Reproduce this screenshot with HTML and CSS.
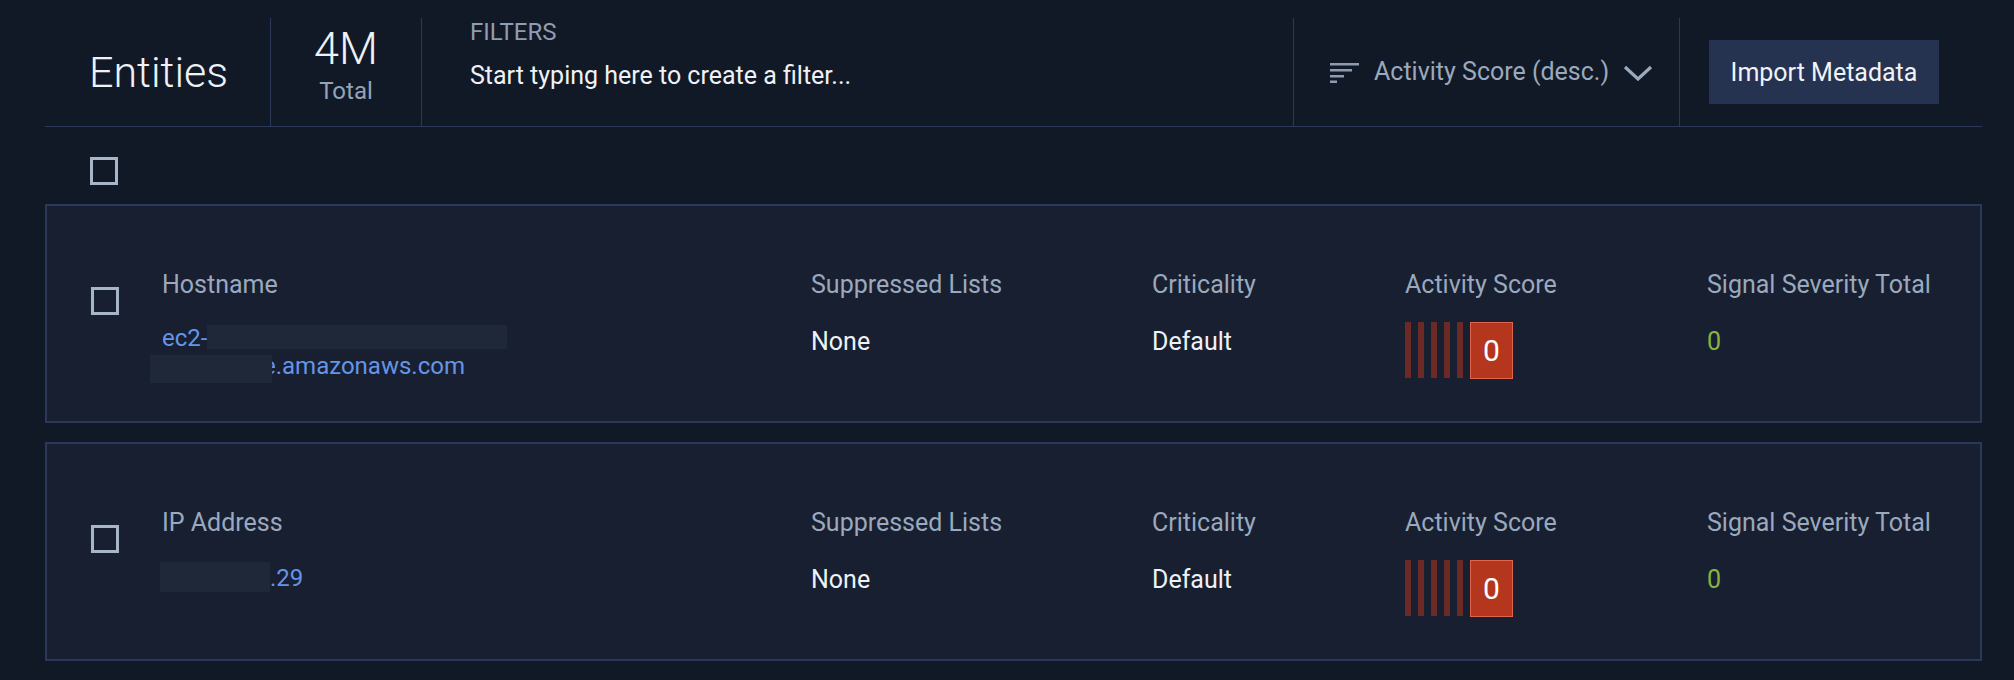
FILE: index.html
```html
<!DOCTYPE html>
<html lang="en">
<head>
<meta charset="utf-8">
<title>Entities</title>
<link rel="stylesheet" href="styles.css">
</head>
<body>
<div class="page">
  <header class="head">
    <div class="head-title">Entities</div>
    <div class="head-count">
      <div class="count-num">4M</div>
      <div class="count-label">Total</div>
    </div>
    <div class="head-filters">
      <div class="filters-label">FILTERS</div>
      <div class="filters-input">Start typing here to create a filter...</div>
    </div>
    <div class="head-sort">
      <svg class="sort-icon" width="29" height="20" viewBox="0 0 29 20">
        <rect x="0" y="0" width="29" height="2.5" fill="#8d9bb1"/>
        <rect x="0" y="6" width="22" height="2.5" fill="#8d9bb1"/>
        <rect x="0" y="12" width="14" height="2.5" fill="#8d9bb1"/>
        <rect x="0" y="17.5" width="7" height="2.5" fill="#8d9bb1"/>
      </svg>
      <span class="sort-text">Activity Score (desc.)</span>
      <svg class="chevron" width="30" height="16" viewBox="0 0 30 16">
        <polyline points="2,2 15,14 28,2" fill="none" stroke="#9aa9bd" stroke-width="3.2"/>
      </svg>
    </div>
    <div class="head-actions">
      <button class="btn-import">Import Metadata</button>
    </div>
  </header>

  <div class="select-all">
    <span class="checkbox"></span>
  </div>

  <div class="card">
    <div class="cell-check"><span class="checkbox"></span></div>
    <div class="col">
      <div class="label">Hostname</div>
      <div class="value link host">ec2-<span class="redact redact-a"></span><br><span class="redact redact-b"></span>e.amazonaws.com</div>
    </div>
    <div class="col">
      <div class="label">Suppressed Lists</div>
      <div class="value">None</div>
    </div>
    <div class="col">
      <div class="label">Criticality</div>
      <div class="value">Default</div>
    </div>
    <div class="col">
      <div class="label">Activity Score</div>
      <div class="score">
        <span class="bar"></span><span class="bar"></span><span class="bar"></span><span class="bar"></span><span class="bar"></span>
        <span class="score-box">0</span>
      </div>
    </div>
    <div class="col">
      <div class="label">Signal Severity Total</div>
      <div class="value green">0</div>
    </div>
  </div>

  <div class="card">
    <div class="cell-check"><span class="checkbox"></span></div>
    <div class="col">
      <div class="label">IP Address</div>
      <div class="value link host"><span class="redact redact-c"></span>.29</div>
    </div>
    <div class="col">
      <div class="label">Suppressed Lists</div>
      <div class="value">None</div>
    </div>
    <div class="col">
      <div class="label">Criticality</div>
      <div class="value">Default</div>
    </div>
    <div class="col">
      <div class="label">Activity Score</div>
      <div class="score">
        <span class="bar"></span><span class="bar"></span><span class="bar"></span><span class="bar"></span><span class="bar"></span>
        <span class="score-box">0</span>
      </div>
    </div>
    <div class="col">
      <div class="label">Signal Severity Total</div>
      <div class="value green">0</div>
    </div>
  </div>
</div>
</body>
</html>
```

FILE: styles.css
```css
* { box-sizing: border-box; }

html, body {
  margin: 0;
  padding: 0;
  background: #121926;
}

body {
  font-family: Roboto, "Liberation Sans", Arial, sans-serif;
  color: #e9edf2;
  font-size: 25px;
  line-height: 28px;
}

.page {
  width: 2014px;
  height: 680px;
  padding: 0 32px 0 45px;
  overflow: hidden;
}

/* ---------- header ---------- */
.head {
  display: flex;
  padding-top: 18px;
  border-bottom: 1px solid #2b3857;
}

.head > div {
  height: 108px;
}

.head-title {
  width: 225px;
  padding-left: 44px;
  display: flex;
  align-items: center;
  font-size: 43px;
  font-weight: 300;
  color: #eef2f6;
}

.head-count {
  width: 151px;
  border-left: 1px solid #2b3857;
  display: flex;
  flex-direction: column;
  align-items: center;
  padding-top: 9px;
}

.count-num {
  font-size: 45px;
  line-height: 44px;
  font-weight: 300;
  color: #eef2f6;
}

.count-label {
  margin-top: 6px;
  font-size: 24px;
  color: #94a3b8;
}

.head-filters {
  width: 872px;
  border-left: 1px solid #2b3857;
  padding-left: 48px;
}

.filters-label {
  color: #8e9db2;
  font-size: 24px;
}

.filters-input {
  margin-top: 16px;
  color: #eef2f6;
}

.head-sort {
  width: 386px;
  border-left: 1px solid #2b3857;
  padding-left: 36px;
  display: flex;
  align-items: center;
}

.sort-icon {
  display: block;
  margin-top: 2px;
}

.sort-text {
  margin-left: 15px;
  color: #9aa9bd;
}

.chevron {
  display: block;
  margin-left: 14px;
  margin-top: 2px;
}

.head-actions {
  flex: 1;
  border-left: 1px solid #2b3857;
  padding-left: 29px;
  display: flex;
  align-items: center;
}

.btn-import {
  width: 230px;
  height: 64px;
  border: 0;
  background: #263350;
  color: #f0f3f7;
  font-family: inherit;
  font-size: 25px;
  padding: 0;
}

/* ---------- list ---------- */
.select-all {
  padding: 30px 0 19px 45px;
  height: 77px;
}

.checkbox {
  display: block;
  width: 28px;
  height: 28px;
  border: 3px solid #a7b5c8;
}

.card {
  height: 219px;
  margin-bottom: 19px;
  border: 2px solid #2b3857;
  background: #181f31;
  padding: 65px 0 0 44px;
  display: grid;
  grid-template-columns: 71px 649px 341px 253px 302px 1fr;
  align-items: start;
}

.cell-check {
  padding-top: 16px;
}

.label {
  color: #9aa9bd;
}

.value {
  margin-top: 29px;
  color: #eef2f6;
}

.value.host {
  margin-top: 25px;
  font-size: 24px;
}

.link {
  color: #6595e6;
}

.green {
  color: #8ab43c;
}

.redact {
  display: inline-block;
  background: #1f2839;
  position: relative;
}

.redact-a {
  width: 300px;
  height: 24px;
  vertical-align: -3px;
}

.redact-b {
  width: 122px;
  height: 28px;
  margin-left: -12px;
  margin-right: -9px;
  vertical-align: -9px;
}

.redact-c {
  width: 110px;
  height: 30px;
  margin-left: -2px;
  vertical-align: -6px;
}

.score {
  margin-top: 23px;
  display: flex;
  align-items: flex-start;
}

.bar {
  width: 6px;
  height: 56px;
  background: #6b2a26;
  margin-right: 7px;
}

.score-box {
  width: 43px;
  height: 57px;
  background: #b3361d;
  border: 1px solid #e0654d;
  color: #ffffff;
  font-size: 30px;
  display: flex;
  align-items: center;
  justify-content: center;
}
```
